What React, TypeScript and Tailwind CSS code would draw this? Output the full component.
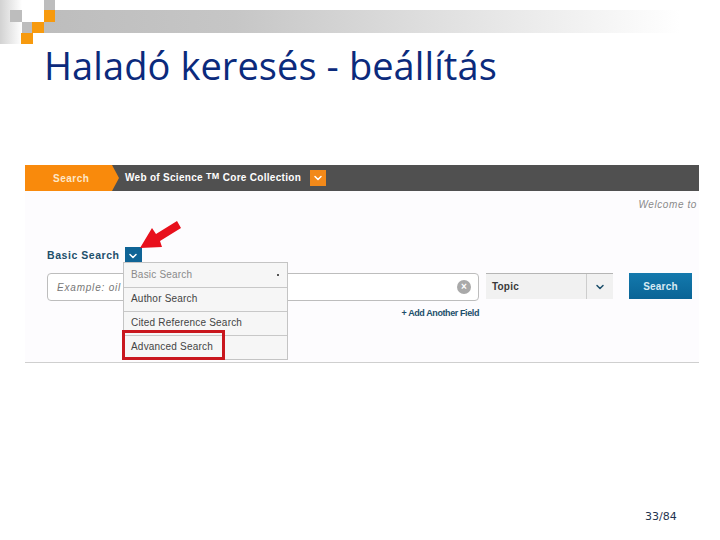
import { ChevronDown } from 'lucide-react';

// ============================================================================
// Slide decoration (gradient band + checker squares)
// ============================================================================

function SlideDecoration() {
  return (
    <svg className="block shrink-0" width="720" height="44" viewBox="0 0 720 44">
      <defs>
        <linearGradient id="band" x1="0" x2="1" y1="0" y2="0">
          <stop offset="0" stopColor="#bdbdbd" />
          <stop offset="0.3" stopColor="#c6c6c6" />
          <stop offset="0.7" stopColor="#e6e6e6" />
          <stop offset="1" stopColor="#ffffff" />
        </linearGradient>
        <linearGradient id="fade" x1="0" x2="1" y1="0" y2="0">
          <stop offset="0" stopColor="#d2d2d2" />
          <stop offset="1" stopColor="#ffffff" />
        </linearGradient>
      </defs>
      <rect x="44" y="10" width="636" height="23" fill="url(#band)" />
      <rect x="0" y="0" width="22" height="44" fill="url(#fade)" />
      <rect x="10" y="10" width="12" height="12" fill="#bdbdbd" />
      <rect x="22" y="22" width="10" height="11" fill="#bdbdbd" />
      <rect x="44" y="0" width="11" height="10" fill="#bdbdbd" />
      <rect x="44" y="10" width="11" height="12" fill="#f79a0e" />
      <rect x="32" y="22" width="12" height="11" fill="#f79a0e" />
      <rect x="21" y="33" width="12" height="11" fill="#f79a0e" />
    </svg>
  );
}

// ============================================================================
// Dropdown menu over the search row
// ============================================================================

function SearchTypeMenu() {
  const rows = ['Author Search', 'Cited Reference Search', 'Advanced Search'];

  return (
    <div className="absolute left-[98px] top-[97px] w-[165px] border border-[#c4c4c4] bg-[#f6f6f6] text-[10px] tracking-[0.2px] text-[#444]">
      <div className="flex h-[24px] items-center justify-between pb-[1px] pl-[7px] pr-[8px] text-[#8a8a8a]">
        <span>Basic Search</span>
        <span className="h-[2px] w-[2px] bg-[#555]" />
      </div>
      {rows.map((row) => (
        <div key={row} className="flex h-[24px] items-center border-t border-[#c8c8c8] pb-[3px] pl-[7px]">
          {row}
        </div>
      ))}
    </div>
  );
}

// ============================================================================
// Embedded Web of Science screenshot
// ============================================================================

function SearchPanel() {
  return (
    <div className="relative ml-[25px] h-[198px] w-[674px] border-b border-[#cfcfcf] bg-[#fdfcfe] font-['Liberation_Sans',sans-serif]">
      {/* Top bar */}
      <div className="flex h-[26px] items-center bg-[#505050]">
        <div
          className="flex h-full w-[94px] items-center bg-[#f98a0c] pl-[28px] text-[10px] font-bold tracking-[0.5px] text-[#fde7c8]"
          style={{ clipPath: 'polygon(0 0, 87px 0, 94px 50%, 87px 100%, 0 100%)' }}
        >
          Search
        </div>
        <span className="ml-[6px] text-[10px] font-bold tracking-[0.3px] text-white">
          Web of Science <span className="relative top-[-2px] text-[9px]">TM</span> Core Collection
        </span>
        <span className="ml-[9px] flex h-[16px] w-[16px] items-center justify-center bg-[#f2891a]">
          <ChevronDown className="h-3 w-3 text-white" strokeWidth={3} />
        </span>
      </div>

      <div className="flex justify-end overflow-hidden pr-[2px] pt-[6px]">
        <span className="text-[10px] italic tracking-[0.6px] text-[#8a8a8a]">Welcome to</span>
      </div>

      {/* Basic Search label */}
      <div className="ml-[22px] mt-[35px] flex h-[17px] items-center gap-[5px]">
        <span className="text-[10.5px] font-bold tracking-[0.55px] text-[#1c4f6b]">Basic Search</span>
        <span className="flex h-[17px] w-[17px] items-center justify-center bg-[#0f6496]">
          <ChevronDown className="h-3 w-3 text-white" strokeWidth={3} />
        </span>
      </div>

      {/* Search row */}
      <div className="ml-[22px] mt-[9px] flex items-start">
        <div className="flex h-[28px] w-[432px] items-center justify-between rounded-[4px] border border-[#bdbdbd] bg-white pl-[9px] pr-[7px]">
          <span className="text-[10px] italic tracking-[0.8px] text-[#777]">Example: oil</span>
          <span className="flex h-[14px] w-[14px] items-center justify-center rounded-full bg-[#a9a9a9] text-[10px] font-bold leading-none text-white">
            ×
          </span>
        </div>
        <div className="ml-[7px] flex h-[26px] w-[127px] items-center border-t border-[#b5b5b5] bg-[#f1f1f1]">
          <span className="w-[100px] pl-[6px] text-[10px] font-bold tracking-[0.2px] text-[#3a3a3a]">Topic</span>
          <span className="flex h-full flex-1 items-center justify-center border-l border-[#cdcdcd]">
            <ChevronDown className="h-3 w-3 text-[#1c4f6b]" strokeWidth={3} />
          </span>
        </div>
        <div className="ml-[16px] flex h-[26px] w-[63px] items-center justify-center bg-gradient-to-b from-[#1379ad] to-[#0a6496] text-[10px] font-bold tracking-[0.2px] text-[#d8eaf3]">
          Search
        </div>
      </div>

      {/* Add field link */}
      <div className="ml-[22px] mt-[7px] w-[432px] text-right text-[9px] font-bold leading-[11px] tracking-[-0.4px] text-[#1c4f6b]">
        + Add Another Field
      </div>

      <SearchTypeMenu />

      {/* Red highlight around Advanced Search */}
      <div className="absolute left-[97px] top-[165px] h-[30px] w-[103px] border-[3px] border-[#c9171e]" />

      {/* Red arrow pointing at the dropdown button */}
      <svg className="absolute left-[112px] top-[54px]" width="46" height="32" viewBox="0 0 46 32">
        <path d="M3 29 L15 9 L19 15 L40 2 L44 9 L23 22 L25 28 Z" fill="#e8101c" />
      </svg>
    </div>
  );
}

// ============================================================================
// Slide
// ============================================================================

export default function App() {
  return (
    <div className="flex h-[540px] w-[720px] flex-col overflow-hidden bg-white">
      <SlideDecoration />
      <h1 className="ml-[44px] mt-[-2px] h-[46px] font-['Open_Sans',sans-serif] text-[38px] leading-[46px] tracking-[0.08px] text-[#0b2a7c]">
        Haladó keresés - beállítás
      </h1>
      <div className="h-[77px] shrink-0" />
      <SearchPanel />
      <div className="ml-[645px] mt-[147px] font-['DejaVu_Sans',sans-serif] text-[11px] leading-[14px] text-[#1f3350]">
        33/84
      </div>
    </div>
  );
}
